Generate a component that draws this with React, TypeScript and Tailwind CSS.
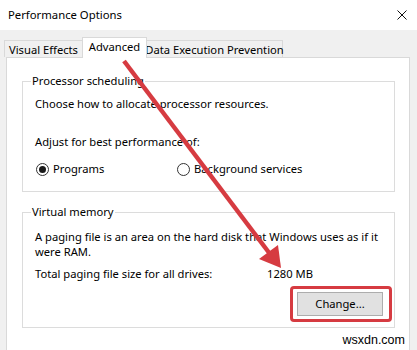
import React from "react";

function Radio({ checked }: { checked?: boolean }) {
  return (
    <span className="flex h-[13px] w-[13px] items-center justify-center rounded-full border border-[#333333] bg-white">
      {checked ? <span className="h-[7px] w-[7px] rounded-full bg-[#1a1a1a]" /> : null}
    </span>
  );
}

export default function App() {
  return (
    <div className="relative flex h-[350px] w-[417px] flex-col overflow-hidden bg-[#f0f0f0] font-['Noto_Sans',sans-serif] text-[11.2px] leading-[16px] text-black">
      {/* Title bar */}
      <div className="flex h-[30px] items-center justify-between bg-white pl-[8px] pr-[10px]">
        <span className="text-[11.3px]">Performance Options</span>
        <svg width="10" height="10" viewBox="0 0 10 10">
          <path d="M0.5 0.5 L9.5 9.5 M9.5 0.5 L0.5 9.5" stroke="#111" strokeWidth="1" />
        </svg>
      </div>

      {/* Tabs */}
      <div className="flex items-end whitespace-nowrap pl-[4px] pt-[7px]">
        <div className="flex h-[17px] w-[79px] items-center justify-center border border-b-0 border-[#d9d9d9] bg-[#f0f0f0] pt-[1px]">
          Visual Effects
        </div>
        <div className="relative z-10 -mb-px -ml-px flex h-[21px] w-[65px] items-start justify-center border border-b-0 border-[#d9d9d9] bg-white pt-[1px]">
          Advanced
        </div>
        <div className="-ml-px flex h-[17px] w-[137px] items-center justify-center border border-b-0 border-[#d9d9d9] bg-[#f0f0f0] pt-[1px]">
          Data Execution Prevention
        </div>
      </div>

      {/* Panel */}
      <div className="ml-[6px] flex w-[404px] flex-1 flex-col border border-b-0 border-[#d9d9d9] bg-white pl-[15px]">
        {/* Processor scheduling */}
        <fieldset className="mt-[15px] w-[373px] border border-[#dcdcdc]">
          <legend className="ml-[8px] px-[1px]">Processor scheduling</legend>
          <div className="flex flex-col pl-[12px] pb-[14px] pt-[7px]">
            <div>Choose how to allocate processor resources.</div>
            <div className="mt-[22px]">Adjust for best performance of:</div>
            <div className="mt-[11px] flex items-center">
              <label className="flex w-[142px] items-center gap-[4px] pl-[1px]">
                <Radio checked />
                <span>Programs</span>
              </label>
              <label className="flex items-center gap-[4px]">
                <Radio />
                <span>Background services</span>
              </label>
            </div>
          </div>
        </fieldset>

        {/* Virtual memory */}
        <fieldset className="mt-[12px] w-[373px] border border-[#dcdcdc]">
          <legend className="ml-[8px] px-[1px]">Virtual memory</legend>
          <div className="flex flex-col pb-[5px] pt-[9px]">
            <div className="pl-[12px] pr-[2px] leading-[15px]">
              A paging file is an area on the hard disk that Windows uses as if it
              <br />
              were RAM.
            </div>
            <div className="mt-[7px] flex pl-[12px]">
              <span className="w-[232px]">Total paging file size for all drives:</span>
              <span>1280 MB</span>
            </div>
            <div className="mt-[4px] flex justify-end pr-[2px]">
              <div className="rounded-[4px] border-[3px] border-[#d63b41] pb-[3px] pl-[4px] pr-[6px] pt-[3px]">
                <button className="flex h-[24px] w-[86px] items-center justify-center border border-[#adadad] bg-[#e1e1e1]">
                  Change...
                </button>
              </div>
            </div>
          </div>
        </fieldset>
      </div>

      {/* Watermark */}
      <div className="pointer-events-none absolute bottom-[2px] right-[12px] font-['Liberation_Sans',sans-serif] text-[12.5px] leading-[16px] text-black">
        wsxdn.com
      </div>

      {/* Arrow overlay */}
      <svg
        className="pointer-events-none absolute left-0 top-0"
        width="417"
        height="350"
        viewBox="0 0 417 350"
      >
        <line x1="124" y1="61" x2="270" y2="254" stroke="#d63b41" strokeWidth="4.5" />
        <polygon points="281,268 259,259 278,245" fill="#d63b41" />
      </svg>
    </div>
  );
}
